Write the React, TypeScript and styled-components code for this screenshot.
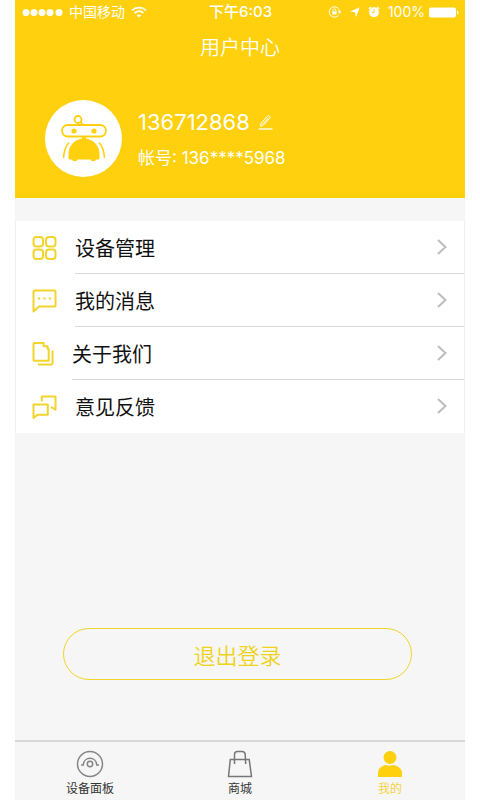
import React from "react";
import styled, { createGlobalStyle } from "styled-components";

const yellow = "#fed00d";
const outline = "#f2d42c";

const GlobalStyle = createGlobalStyle`
  * { box-sizing: border-box; }
  body {
    margin: 0;
    background: #fff;
    font-family: Inter, "Noto Sans CJK SC", sans-serif;
  }
  button { font-family: inherit; }
  svg { display: block; flex: none; }
`;

const Screen = styled.div`
  display: flex;
  flex-direction: column;
  min-height: 100vh;
  margin: 0 15px;
  background: #f6f6f6;
`;

const Header = styled.header`
  background: ${yellow};
  color: #fff;
  padding-bottom: 21px;
`;

const StatusBar = styled.div`
  display: grid;
  grid-template-columns: 1fr auto 1fr;
  align-items: center;
  height: 24px;
  padding: 0 6px 0 7px;
  font-size: 14px;
  line-height: 24px;
`;

const StatusGroup = styled.div<{ $end?: boolean }>`
  display: flex;
  align-items: center;
  justify-content: ${(p) => (p.$end ? "flex-end" : "flex-start")};
  gap: ${(p) => (p.$end ? 4 : 6)}px;
`;

const StatusTime = styled.time`
  font-size: 15px;
  font-weight: 500;
`;

const BatteryLevel = styled.span`
  font-size: 14px;
`;

const StatusIcons = styled.div`
  display: flex;
  align-items: center;
  gap: 8px;
  margin-right: 4px;
`;

const Title = styled.h1`
  margin: 0;
  font-size: 20px;
  line-height: 48px;
  font-weight: 350;
  text-align: center;
`;

const Profile = styled.section`
  display: flex;
  align-items: center;
  gap: 16px;
  padding: 28px 30px 0;
`;

const Avatar = styled.div`
  display: flex;
  align-items: center;
  justify-content: center;
  flex: none;
  width: 77px;
  height: 77px;
  border-radius: 50%;
  background: #fff;
`;

const ProfileText = styled.div`
  display: flex;
  flex-direction: column;
  gap: 8px;
  padding-top: 2px;
`;

const NameRow = styled.div`
  display: flex;
  align-items: center;
  gap: 8px;
  font-size: 22px;
  line-height: 28px;
`;

const EditButton = styled.button`
  border: 0;
  padding: 0;
  background: none;
  color: inherit;
  cursor: pointer;
`;

const Account = styled.div`
  font-size: 17px;
  line-height: 28px;
`;

const Menu = styled.nav`
  margin-top: 23px;
  background: #fff;
  border: solid #f0f0f0;
  border-width: 0 1px;
`;

const MenuRow = styled.a`
  display: flex;
  align-items: center;
  gap: 18px;
  padding-left: 16px;
  color: #111;
  text-decoration: none;
  &:last-child > span { border-bottom-color: transparent; }
`;

const MenuLabel = styled.span`
  display: flex;
  flex: 1;
  align-items: center;
  justify-content: space-between;
  height: 53px;
  padding-right: 16px;
  border-bottom: 1px solid #d9d9d9;
  font-size: 20px;
`;

const Content = styled.main`
  display: flex;
  flex: 1;
  flex-direction: column;
`;

const LogoutArea = styled.div`
  margin-top: auto;
  padding: 40px 53px 60px 48px;
`;

const LogoutButton = styled.button`
  display: block;
  width: 100%;
  height: 52px;
  border: 1px solid ${outline};
  border-radius: 26px;
  background: transparent;
  color: #efd31a;
  font-size: 22px;
  font-weight: 350;
  cursor: pointer;
`;

const TabBar = styled.nav`
  display: grid;
  grid-template-columns: repeat(3, 1fr);
  height: 60px;
  border-top: 2px solid #d8d8d6;
`;

const Tab = styled.a<{ $active?: boolean }>`
  display: flex;
  flex-direction: column;
  align-items: center;
  padding-top: 8px;
  color: ${(p) => (p.$active ? "#f5d33c" : "#333")};
  font-size: 12px;
  line-height: 22px;
  text-decoration: none;
`;

const SignalDots = () => (
  <svg width="41" height="9" fill="#fff" aria-hidden="true">
    {[4, 12, 20, 28, 37].map((x) => (
      <circle key={x} cx={x} cy="4.5" r="3.5" />
    ))}
  </svg>
);

const Wifi = () => (
  <svg width="16" height="12" viewBox="0 0 16 12" fill="none" stroke="#fff" strokeWidth="1.8" aria-hidden="true">
    <path d="M1 4.400c4-3.600 10-3.600 14 0M3.600 7c2.600-2.200 6.200-2.200 8.800 0" />
    <path d="M8 11.500 5.600 9.200c1.400-1.100 3.400-1.100 4.800 0z" fill="#fff" stroke="none" />
  </svg>
);

const RotationLock = () => (
  <svg width="14" height="12" viewBox="0 0 14 12" fill="none" stroke="#fff" aria-hidden="true">
    <path d="M10.800 8.800A5.200 5.200 0 1 1 11.600 5.500" />
    <path d="M9.600 5.300h4l-2 2.400z" fill="#fff" stroke="none" />
    <path d="M4.200 5.300h4.400v3.200H4.200z" fill="#fff" stroke="none" />
    <path d="M5 5.500V4.300a1.400 1.400 0 0 1 2.800 0v1.200" />
  </svg>
);

const LocationArrow = () => (
  <svg width="10" height="10" viewBox="0 0 10 10" fill="#fff" aria-hidden="true">
    <path d="M9.800.2 6 10 5 5.200.2 4.600z" />
  </svg>
);

const Alarm = () => (
  <svg width="12" height="12" viewBox="0 0 12 12" aria-hidden="true">
    <circle cx="6" cy="6.300" r="5" fill="#fff" />
    <path d="M.8 3 3 1M11.200 3 9 1" stroke="#fff" strokeWidth="1.300" />
    <path d="M6 3.200v3.300H4" fill="none" stroke={yellow} />
  </svg>
);

const Battery = () => (
  <svg width="30" height="11" viewBox="0 0 30 11" fill="#fff" aria-hidden="true">
    <rect y=".5" width="27" height="10" rx="2" />
    <path d="M28 3.500c2 .6 2 3.400 0 4z" />
  </svg>
);

const Robot = () => (
  <svg width="46" height="48" viewBox="0 0 46 48" fill="none" stroke={yellow} strokeWidth="1.800" aria-hidden="true">
    <circle cx="17" cy="4.500" r="3.500" />
    <path d="M19.500 7 22 10" />
    <rect x="1" y="10" width="44" height="11.500" rx="5.700" />
    <circle cx="13" cy="16" r="2.600" fill={yellow} stroke="none" />
    <circle cx="33" cy="16" r="2.600" fill={yellow} stroke="none" />
    <path d="M21 21h4v4h-4z" fill={yellow} stroke="none" />
    <path d="M7.500 43.500V39a15.500 15.500 0 0 1 31 0v4.500q0 1-1 1H35L34 46h-3.500l-1-1.500h-13l-1 1.500H12l-1-1.500H8.500q-1 0-1-1z" fill={yellow} stroke="none" />
    <path d="M8 27.500Q3 33 2.500 43M38 27.500q5 5.500 5.500 15.500" strokeWidth="1.500" />
  </svg>
);

const Pencil = () => (
  <svg width="15" height="16" viewBox="0 0 15 16" fill="none" stroke="#fff" aria-hidden="true">
    <path d="M.5 15h14" strokeWidth="1.300" />
    <path d="M2.500 12.300 3.200 9 10.300 1.300l2.200 2L5.500 11zM4.500 10.200l6-6.500" />
  </svg>
);

const menuIcon = { height: 24, fill: "none", stroke: outline, strokeWidth: 2, strokeLinejoin: "round", "aria-hidden": true } as const;

const Grid = () => (
  <svg {...menuIcon} width="25" viewBox="0 0 25 24">
    {[1.5, 14].map((x) => [1, 13.5].map((y) => <rect key={`${x}-${y}`} x={x} y={y} width="9.500" height="9.500" rx="3" />))}
  </svg>
);

const Message = () => (
  <svg {...menuIcon} width="25" viewBox="0 0 25 24">
    <path d="M2.500 1.500h20a1 1 0 0 1 1 1v14a1 1 0 0 1-1 1H7l-5.500 5V2.500a1 1 0 0 1 1-1z" />
    <path d="M6 9.500h2.200M11.400 9.500h2.200M16.800 9.500H19" />
  </svg>
);

const Pages = () => (
  <svg {...menuIcon} width="22" viewBox="0 0 22 24">
    <path d="M2.500 1h9.200v3.200h3.800v2.500h1.200v12.100H2.500a1 1 0 0 1-1-1V2a1 1 0 0 1 1-1z" />
    <path d="M20.500 8.500v12.800a1.200 1.200 0 0 1-1.200 1.200H6" />
  </svg>
);

const Chats = () => (
  <svg {...menuIcon} width="25" viewBox="0 0 25 24">
    <path d="M1.500 9.500h14.300v10.300H5.500l-4 3.200z" />
    <path d="M9.800 6.500V1.500h13.700v13.300l-3.300-2.300h-1.400" />
  </svg>
);

const Chevron = () => (
  <svg width="12" height="16" viewBox="0 0 12 16" fill="none" stroke="#bdbdbd" strokeWidth="2" aria-hidden="true">
    <path d="m2 1 7.500 7L2 15" />
  </svg>
);

const PanelIcon = () => (
  <svg width="28" height="28" viewBox="0 0 28 28" fill="none" stroke="#858585" strokeWidth="1.500" aria-hidden="true">
    <circle cx="14" cy="14" r="12.500" />
    <circle cx="14" cy="14" r="2.700" />
    <path d="M5 15h2.300c.5-9 12.900-9 13.400 0H23" />
  </svg>
);

const BagIcon = () => (
  <svg width="28" height="28" viewBox="0 0 28 28" fill="none" stroke="#777" strokeWidth="1.500" aria-hidden="true">
    <path d="M4.300 9.500h18.900l2.300 17H2.500z" />
    <path d="M8.500 14V4.500Q8.500 1.500 11.500 1.500h4.500q3 0 3.200 3l.5 9.500" />
  </svg>
);

const UserIcon = () => (
  <svg width="28" height="28" viewBox="0 0 28 28" fill={yellow} aria-hidden="true">
    <circle cx="14" cy="7.500" r="6.500" />
    <path d="M2 27v-4.500c0-3.500 3.500-7 8-7.500 2 1 5 1 7 0 5 .5 9 4 9 7.500V27z" />
  </svg>
);

const menuItems = [
  { label: "设备管理", Icon: Grid },
  { label: "我的消息", Icon: Message },
  { label: "关于我们", Icon: Pages },
  { label: "意见反馈", Icon: Chats },
];

const tabs = [
  { label: "设备面板", Icon: PanelIcon },
  { label: "商城", Icon: BagIcon },
  { label: "我的", Icon: UserIcon, active: true },
];

export default function App() {
  return (
    <>
      <GlobalStyle />
      <Screen>
        <Header>
          <StatusBar>
            <StatusGroup>
              <SignalDots />
              <span>中国移动</span>
              <Wifi />
            </StatusGroup>
            <StatusTime>下午6:03</StatusTime>
            <StatusGroup $end>
              <StatusIcons>
                <RotationLock />
                <LocationArrow />
                <Alarm />
              </StatusIcons>
              <BatteryLevel>100%</BatteryLevel>
              <Battery />
            </StatusGroup>
          </StatusBar>
          <Title>用户中心</Title>
          <Profile>
            <Avatar>
              <Robot />
            </Avatar>
            <ProfileText>
              <NameRow>
                <span>136712868</span>
                <EditButton type="button" aria-label="编辑">
                  <Pencil />
                </EditButton>
              </NameRow>
              <Account>帐号: 136****5968</Account>
            </ProfileText>
          </Profile>
        </Header>
        <Content>
          <Menu>
            {menuItems.map(({ label, Icon }) => (
              <MenuRow key={label} href="#">
                <Icon />
                <MenuLabel>
                  {label}
                  <Chevron />
                </MenuLabel>
              </MenuRow>
            ))}
          </Menu>
          <LogoutArea>
            <LogoutButton type="button">退出登录</LogoutButton>
          </LogoutArea>
        </Content>
        <TabBar>
          {tabs.map(({ label, Icon, active }) => (
            <Tab key={label} href="#" $active={active} aria-current={active ? "page" : undefined}>
              <Icon />
              {label}
            </Tab>
          ))}
        </TabBar>
      </Screen>
    </>
  );
}
